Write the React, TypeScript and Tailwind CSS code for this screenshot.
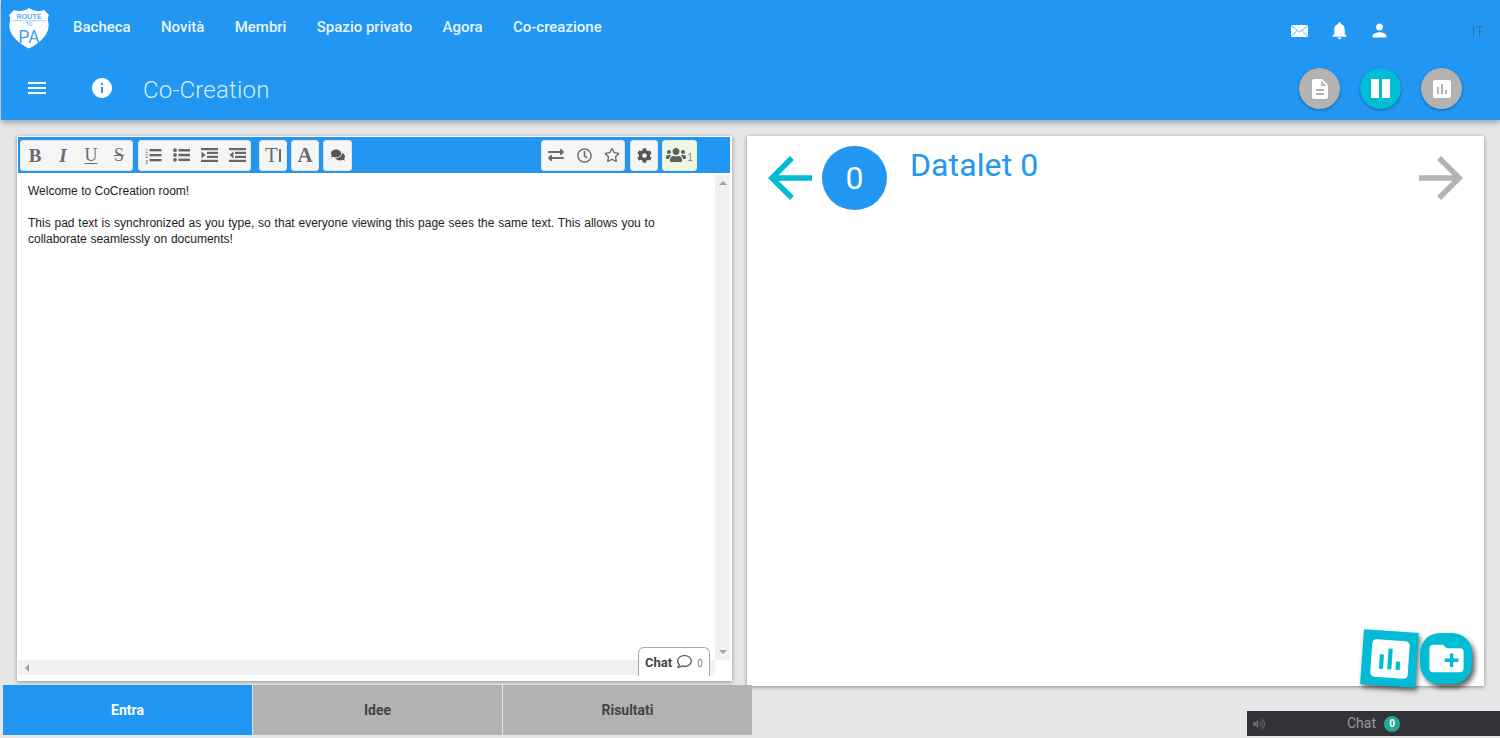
import React from "react";
import {
  FaComments, FaExchangeAlt, FaRegClock, FaRegStar, FaCog, FaUsers, FaRegComment, FaVolumeUp,
} from "react-icons/fa";

const P = {
  bell: "M12 22c1.1 0 2-.9 2-2h-4c0 1.1.89 2 2 2zm6-6v-5c0-3.07-1.64-5.64-4.5-6.32V4c0-.83-.67-1.5-1.5-1.5s-1.5.67-1.5 1.5v.68C7.63 5.36 6 7.92 6 11v5l-2 2v1h16v-1l-2-2z",
  person: "M12 12c2.21 0 4-1.79 4-4s-1.79-4-4-4-4 1.79-4 4 1.79 4 4 4zm0 2c-2.67 0-8 1.34-8 4v2h16v-2c0-2.66-5.33-4-8-4z",
  info: "M12 2C6.48 2 2 6.48 2 12s4.48 10 10 10 10-4.48 10-10S17.52 2 12 2zm1 15h-2v-6h2v6zm0-8h-2V7h2v2z",
  menu: "M3 18h18v-2H3v2zm0-5h18v-2H3v2zm0-7v2h18V6H3z",
  doc: "M14 2H6c-1.1 0-1.99.9-1.99 2L4 20c0 1.1.89 2 1.99 2H18c1.1 0 2-.9 2-2V8l-6-6zm2 16H8v-2h8v2zm0-4H8v-2h8v2zm-3-5V3.5L18.5 9H13z",
  chart: "M19 3H5c-1.1 0-2 .9-2 2v14c0 1.1.9 2 2 2h14c1.1 0 2-.9 2-2V5c0-1.1-.9-2-2-2zM9 17H7v-7h2v7zm4 0h-2V7h2v10zm4 0h-2v-4h2v4z",
  folder: "M20 6h-8l-2-2H4c-1.11 0-1.99.89-1.99 2L2 18c0 1.11.89 2 2 2h16c1.11 0 2-.89 2-2V8c0-1.11-.89-2-2-2zm-1 8h-3v3h-2v-3h-3v-2h3V9h2v3h3v2z",
  back: "M20 11H7.83l5.59-5.59L12 4l-8 8 8 8 1.41-1.41L7.83 13H20v-2z",
  forward: "M12 4l-1.41 1.41L16.17 11H4v2h12.17l-5.58 5.59L12 20l8-8z",
};

function I({ d, className }: { d: string; className: string }) {
  return (
    <svg viewBox="0 0 24 24" className={className} fill="currentColor">
      <path d={d} />
    </svg>
  );
}

function Mail() {
  return (
    <svg viewBox="0 0 17 12" className="w-[17px] h-[12px] mt-[6px] ml-[1px]">
      <rect width="17" height="12" rx="1.500" fill="#fff" />
      <path d="M0.500 1 L8.500 7 L16.500 1 M0.500 11.300 L6 5.500 M16.500 11.300 L11 5.500" stroke="#5fb2f6" strokeWidth="1" fill="none" />
    </svg>
  );
}

function Logo() {
  return (
    <svg viewBox="0 0 42 42" className="w-[42px] h-[42px] shrink-0">
      <path d="M6 3 C11 5 17 4 21 1 C25 4 31 5 36 3 L41 8 C39.500 11 39.500 13 40.500 16 C42 26 34 35 21 41.500 C8 35 0 26 1.500 16 C2.500 13 2.500 11 1 8 Z" fill="#fff" />
      <path d="M3.500 13.800 H38.500" stroke="#8cc8f8" strokeWidth="0.800" />
      <text x="21" y="11.800" textAnchor="middle" fontSize="8" fontWeight="500" fontFamily="Roboto, sans-serif" fill="#4aa7f5">ROUTE</text>
      <text x="21" y="18.500" textAnchor="middle" fontSize="5" fontFamily="Roboto, sans-serif" fill="#55aaf5">TO</text>
      <text x="21" y="36.200" textAnchor="middle" fontSize="17.500" fontFamily="Roboto, sans-serif" fill="#3fa2f4">PA</text>
    </svg>
  );
}

function OlIcon() {
  return (
    <svg viewBox="0 0 17 17" className="w-[17px] h-[17px]" fill="#666">
      <text x="0" y="5.500" fontSize="5.500" fontFamily="'Liberation Sans', sans-serif">1</text>
      <text x="0" y="11" fontSize="5.500" fontFamily="'Liberation Sans', sans-serif">2</text>
      <text x="0" y="16.500" fontSize="5.500" fontFamily="'Liberation Sans', sans-serif">3</text>
      <rect x="4.500" y="2" width="12" height="2.300" />
      <rect x="4.500" y="7" width="12" height="2.300" />
      <rect x="4.500" y="12" width="12" height="2.300" />
    </svg>
  );
}

function UlIcon() {
  return (
    <svg viewBox="0 0 17 14" className="w-[17px] h-[14px]" fill="#666">
      <circle cx="2" cy="2.200" r="1.900" />
      <circle cx="2" cy="7" r="1.900" />
      <circle cx="2" cy="11.800" r="1.900" />
      <rect x="5.500" y="1" width="11.500" height="2.500" />
      <rect x="5.500" y="5.800" width="11.500" height="2.500" />
      <rect x="5.500" y="10.600" width="11.500" height="2.500" />
    </svg>
  );
}

function IndentIcon({ out }: { out?: boolean }) {
  return (
    <svg viewBox="0 0 17 14" className="w-[17px] h-[14px]" fill="#666">
      <rect x="0" y="0" width="17" height="2.200" />
      <rect x="6" y="3.800" width="11" height="2.200" />
      <rect x="6" y="7.800" width="11" height="2.200" />
      <rect x="0" y="11.800" width="17" height="2.200" />
      <path d={out ? "M4.500 3.500 L0.500 7 L4.500 10.500 Z" : "M0.500 3.500 L4.500 7 L0.500 10.500 Z"} />
    </svg>
  );
}

function Group({ children, className = "" }: { children: React.ReactNode; className?: string }) {
  return (
    <div className={`h-[31px] flex items-center rounded-[3px] border border-[#e4e4e4] bg-[#f5f5f5] text-[#6a6a6a] ${className}`}>
      {children}
    </div>
  );
}

function Btn({ children }: { children: React.ReactNode }) {
  return <div className="w-[28px] h-full flex items-center justify-center shrink-0">{children}</div>;
}

function Tab({ label, active }: { label: string; active?: boolean }) {
  return (
    <div className={`w-[249px] h-[50px] flex items-center justify-center text-[14px] font-bold ${active ? "bg-[#2196f3] text-white" : "bg-[#b3b3b3] text-[#444]"}`}>
      {label}
    </div>
  );
}

function Round({ d, bg }: { d: string; bg: string }) {
  return (
    <div className={`w-[41px] h-[41px] rounded-full flex items-center justify-center text-white shadow-[0_1px_3px_rgba(0,0,0,0.35)] ${bg}`}>
      <I d={d} className="w-[24px] h-[24px]" />
    </div>
  );
}

const serif = "font-['Liberation_Serif',serif] leading-none";

export default function App() {
  const nav = ["Bacheca", "Novità", "Membri", "Spazio privato", "Agora", "Co-creazione"];
  return (
    <div className="relative w-[1500px] h-[738px] overflow-hidden bg-[#e6e6e6] font-['Roboto',sans-serif]">
      <header className="h-[120px] ml-px bg-[#2196f3] text-white shadow-[0_2px_6px_rgba(0,0,0,0.35)] flex flex-col relative z-10">
        <div className="h-[60px] flex pl-[7px]">
          <div className="pt-[7px]"><Logo /></div>
          <nav className="ml-[23px] flex gap-[30.300px] pt-[18px] text-[15px] font-medium leading-[18px] h-fit text-[#e8f4fe]">
            {nav.map((n) => <span key={n}>{n}</span>)}
          </nav>
          <div className="ml-auto flex pt-[19px] text-white">
            <Mail />
            <I d={P.bell} className="w-[21px] h-[21px] ml-[21px] mt-px" />
            <I d={P.person} className="w-[21px] h-[21px] ml-[19px] mt-px" />
            <span className="ml-[82px] mr-[16px] text-[14px] font-light text-[#3f6a8e] leading-[26px]">IT</span>
          </div>
        </div>
        <div className="h-[60px] flex items-start pl-[24px]">
          <I d={P.menu} className="w-[24px] h-[24px] mt-[16px]" />
          <I d={P.info} className="w-[24px] h-[24px] ml-[41px] mt-[16px]" />
          <span className="ml-[29px] mt-[13px] text-[24px] leading-[34px] font-light tracking-[0.2px] text-[#d8ecfd]">Co-Creation</span>
          <div className="ml-auto flex gap-[20px] pr-[38px] mt-[8px]">
            <Round d={P.doc} bg="bg-[#b3b3b3]" />
            <div className="w-[41px] h-[41px] rounded-full bg-[#00bcd4] flex items-center justify-center gap-[3px] shadow-[0_1px_3px_rgba(0,0,0,0.35)]">
              <div className="w-[8px] h-[19px] bg-white" />
              <div className="w-[8px] h-[19px] bg-white" />
            </div>
            <Round d={P.chart} bg="bg-[#b3b3b3]" />
          </div>
        </div>
      </header>

      <main className="flex pt-[16px]">
        <div className="w-[747px] shrink-0">
          <section className="relative ml-[17px] w-[715px] h-[545px] bg-white shadow-[0_1px_4px_rgba(0,0,0,0.4)] flex flex-col text-[12px] font-['Liberation_Sans',sans-serif]">
            <div className="mt-px ml-px mr-[2px] h-[36px] bg-[#2196f3] flex items-center pl-[2px] pr-[33px]">
              <Group className="w-[113px] text-[#6a6a6a]">
                <Btn><span className={`${serif} text-[19px] font-bold`}>B</span></Btn>
                <Btn><span className={`${serif} text-[19px] font-bold italic`}>I</span></Btn>
                <Btn><span className={`${serif} text-[18px] underline decoration-1 underline-offset-2`}>U</span></Btn>
                <Btn><span className={`${serif} text-[18px] line-through decoration-1`}>S</span></Btn>
              </Group>
              <Group className="w-[113px] ml-[5px]">
                <Btn><OlIcon /></Btn>
                <Btn><UlIcon /></Btn>
                <Btn><IndentIcon /></Btn>
                <Btn><IndentIcon out /></Btn>
              </Group>
              <Group className="w-[28px] ml-[8px] justify-center gap-[1px]">
                <span className={`${serif} text-[21px]`}>T</span>
                <div className="w-[2px] h-[13px] bg-[#6a6a6a] mt-[1px]" />
              </Group>
              <Group className="w-[28px] ml-[4px] justify-center">
                <span className={`${serif} text-[21px] font-bold`}>A</span>
              </Group>
              <Group className="w-[29px] ml-[4px] justify-center"><FaComments size={14} className="text-[#555]" /></Group>
              <Group className="w-[84px] ml-auto pl-[-1px]">
                <Btn><FaExchangeAlt size={16} /></Btn>
                <Btn><FaRegClock size={15} /></Btn>
                <Btn><FaRegStar size={16} /></Btn>
              </Group>
              <Group className="w-[28px] ml-[5px] justify-center"><FaCog size={15} className="text-[#555]" /></Group>
              <div className="h-[31px] w-[35px] ml-[4px] rounded-[3px] bg-[#eef7e1] text-[#5f5f5f] flex items-center justify-center gap-[1px] border border-[#e4efd6]">
                <FaUsers size={20} />
                <span className="text-[10px] mt-[5px] text-[#888]">1</span>
              </div>
            </div>
            <div className="flex flex-1 min-h-0 pr-[2px] pl-px">
              <div className="flex-1 flex flex-col min-w-0">
                <div className="flex-1 pl-[10px] pt-[10px] leading-[16px] text-[#222]">
                  <p>Welcome to CoCreation room!</p>
                  <p className="h-[16px]" />
                  <p className="w-[640px] [word-spacing:0.5px]">This pad text is synchronized as you type, so that everyone viewing this page sees the same text. This allows you to collaborate seamlessly on documents!</p>
                </div>
                <div className="h-[15px] bg-[#f1f1f1] flex items-center pl-[7px]">
                  <div className="w-0 h-0 border-y-[4px] border-y-transparent border-r-[4px] border-r-[#a3a3a3]" />
                </div>
                <div className="h-[6px]" />
              </div>
              <div className="w-[15px] bg-[#f1f1f1] flex flex-col items-center justify-between mt-[2px] mb-[21px] py-[6px]">
                <div className="w-0 h-0 border-x-[4px] border-x-transparent border-b-[4px] border-b-[#a3a3a3]" />
                <div className="w-0 h-0 border-x-[4px] border-x-transparent border-t-[4px] border-t-[#a3a3a3]" />
              </div>
            </div>
            <div className="absolute left-[621px] top-[511px] w-[72px] h-[29px] bg-white border border-b-0 border-[#aaa] rounded-t-[6px] flex items-center pt-[2px] pl-[6px] font-['Roboto',sans-serif] text-[13px] font-bold text-[#444]">
              <span>Chat</span>
              <FaRegComment size={15} className="ml-[5px] text-[#666] -mt-[3px]" />
              <span className="ml-[5px] text-[10px] font-normal text-[#777]">0</span>
            </div>
          </section>
          <div className="mt-[4px] ml-[3px] w-[750px] flex gap-px relative z-[1]">
            <Tab label="Entra" active />
            <Tab label="Idee" />
            <Tab label="Risultati" />
          </div>
        </div>

        <section className="relative w-[737px] h-[550px] bg-white shadow-[0_1px_4px_rgba(0,0,0,0.4)] flex items-start">
          <I d={P.back} className="w-[66px] h-[66px] ml-[10px] mt-[9px] text-[#00bcd4] shrink-0" />
          <div className="w-[65px] h-[64px] -ml-px mt-[10px] rounded-full bg-[#2196f3] text-white text-[32px] flex items-center justify-center shrink-0">0</div>
          <h2 className="ml-[23px] mt-[9px] text-[32px] leading-[40px] tracking-[0.1px] font-normal text-[#2196f3]">Datalet 0</h2>
          <I d={P.forward} className="w-[66px] h-[66px] ml-auto mr-[10px] mt-[9px] text-[#b3b3b3] shrink-0" />
          <div className="absolute left-[615px] top-[495px] w-[55px] h-[55px] rotate-[4deg] bg-[#00bcd4] text-white flex items-center justify-center shadow-[2px_3px_5px_rgba(0,0,0,0.55)]">
            <I d={P.chart} className="w-[50px] h-[50px]" />
          </div>
          <div className="absolute left-[673px] top-[497px] w-[52px] h-[51px] rounded-[20px] bg-[#00bcd4] text-white flex items-center justify-center shadow-[3px_4px_5px_rgba(0,0,0,0.6)]">
            <I d={P.folder} className="w-[41px] h-[41px]" />
          </div>
        </section>
      </main>

      <div className="absolute left-[1247px] top-[711px] w-[253px] h-[25px] bg-[#333238] flex items-center text-[#9a9a9a] text-[14px]">
        <FaVolumeUp size={12} className="ml-[6px] text-[#666]" />
        <span className="ml-[82px]">Chat</span>
        <span className="ml-[8px] w-[16px] h-[16px] rounded-full bg-[#26a69a] text-white text-[10px] font-bold flex items-center justify-center">0</span>
      </div>
    </div>
  );
}
